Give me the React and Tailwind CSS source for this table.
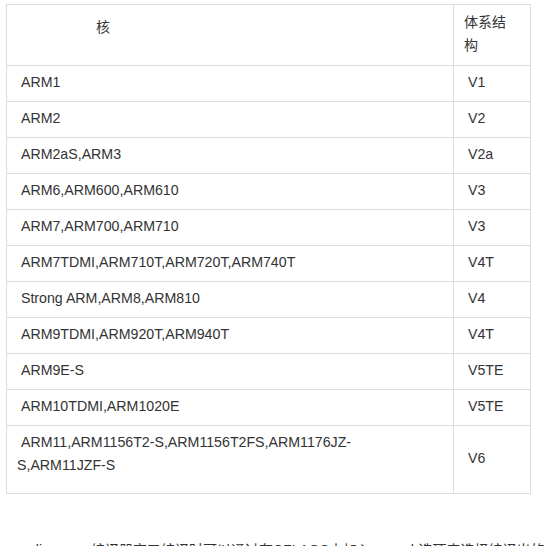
const rows = [
  ['ARM1', 'V1'],
  ['ARM2', 'V2'],
  ['ARM2aS,ARM3', 'V2a'],
  ['ARM6,ARM600,ARM610', 'V3'],
  ['ARM7,ARM700,ARM710', 'V3'],
  ['ARM7TDMI,ARM710T,ARM720T,ARM740T', 'V4T'],
  ['Strong ARM,ARM8,ARM810', 'V4'],
  ['ARM9TDMI,ARM920T,ARM940T', 'V4T'],
  ['ARM9E-S', 'V5TE'],
  ['ARM10TDMI,ARM1020E', 'V5TE'],
]

const cell = 'border border-[#dddddd] pl-[10px] pr-[10px] pt-[5px] pb-[7px] align-middle text-left font-normal'

export default function App() {
  return (
    <div
      className="w-[547px] h-[546px] overflow-hidden bg-white text-[14px] leading-[23px] text-[#333333]"
      style={{ fontFamily: '"Liberation Sans", "Noto Sans CJK SC", sans-serif' }}
    >
      <div className="pt-[4px] pl-[6px]">
        <table className="table-fixed border-collapse w-[524px] text-[14.2px]">
          <colgroup>
            <col className="w-[447px]" />
            <col className="w-[77px]" />
          </colgroup>
          <tbody>
            <tr className="h-[61px]">
              <td className="border border-[#dddddd] pl-[89px] pt-[11px] align-top text-[14px]">核</td>
              <td className="border border-[#dddddd] pl-[10px] pr-[10px] pt-[6px] pb-[8px] align-top text-[14px]">
                体系结
                <br />
                构
              </td>
            </tr>
            {rows.map(([core, arch], i) => (
              <tr key={i} className="h-[36px]">
                <td className={cell}>{'\u00a0' + core}</td>
                <td className={cell}>{'\u00a0' + arch}</td>
              </tr>
            ))}
            <tr className="h-[68px]">
              <td className="border border-[#dddddd] pl-[10px] pr-[10px] pt-[5px] pb-[16px] align-top">
                {'\u00a0ARM11,ARM1156T2-S,ARM1156T2FS,ARM1176JZ-'}
                <br />
                S,ARM11JZF-S
              </td>
              <td className={cell}>{'\u00a0V6'}</td>
            </tr>
          </tbody>
        </table>
      </div>
      <p className="mt-[45px] pl-[7px] whitespace-nowrap">
        arm-linux-gcc编译器交叉编译时可以通过在CFLAGS中加入 -march选项来选择编译出的代码的体系结构
      </p>
    </div>
  )
}
